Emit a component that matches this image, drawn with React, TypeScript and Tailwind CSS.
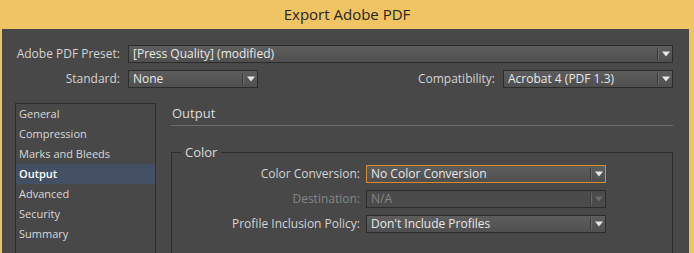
const font = { fontFamily: '"Open Sans", "Noto Sans", sans-serif' };

function Arrow({ disabled }: { disabled?: boolean }) {
  return (
    <svg width="8" height="6" viewBox="0 0 8 6">
      <path d="M0 0.5 L8 0.5 L4 5.5 Z" fill={disabled ? "#6a6a6a" : "#e6e6e6"} />
    </svg>
  );
}

function Select({
  value,
  className = "",
  focused,
  disabled,
}: {
  value: string;
  className?: string;
  focused?: boolean;
  disabled?: boolean;
}) {
  return (
    <div
      className={
        "flex h-[18px] items-center border " +
        (focused ? "border-[#d88a2c] " : "border-[#2c2c2c] ") +
        (disabled ? "bg-[#4b4b4b] " : "bg-gradient-to-b from-[#5d5d5d] to-[#4f4f4f] ") +
        className
      }
    >
      <span
        className={
          "flex-1 truncate pl-[4px] text-[12px] leading-[16px] " +
          (disabled ? "text-[#858585]" : "text-[#e8e8e8]")
        }
      >
        {value}
      </span>
      <span className="h-[12px] w-px bg-[#3a3a3a]" />
      <span className="h-[12px] w-px bg-[#6a6a6a]" />
      <span className="flex w-[13px] justify-center">
        <Arrow disabled={disabled} />
      </span>
    </div>
  );
}

const pages = ["General", "Compression", "Marks and Bleeds", "Output", "Advanced", "Security", "Summary"];

export default function App() {
  return (
    <div className="flex h-[253px] w-[694px] flex-col overflow-hidden bg-[#f0c462]" style={font}>
      {/* title bar */}
      <div className="flex h-[29px] shrink-0 items-center justify-center text-[15px] text-[#262626]">
        Export Adobe PDF
      </div>

      <div className="ml-[2px] mr-[5px] flex-1 bg-[#484848] pt-[16px] text-[12px] text-[#d4d4d4]">
        {/* preset */}
        <div className="flex items-center pr-[16px]">
          <span className="w-[118px] text-right">Adobe PDF Preset:</span>
          <Select value="[Press Quality] (modified)" className="ml-[8px] flex-1" />
        </div>

        {/* standard / compatibility */}
        <div className="mt-[7px] flex items-center pr-[16px]">
          <span className="w-[118px] text-right">Standard:</span>
          <Select value="None" className="ml-[8px] w-[130px]" />
          <span className="flex-1 text-right">Compatibility:</span>
          <Select value="Acrobat 4 (PDF 1.3)" className="ml-[8px] w-[170px]" />
        </div>

        <div className="mt-[15px] flex pl-[13px] pr-[16px]">
          {/* side list */}
          <div className="h-[200px] w-[141px] shrink-0 border border-[#2e2e2e]">
            {pages.map((p) => (
              <div
                key={p}
                className={
                  "flex h-[20px] items-center pl-[3px] text-[11px] " +
                  (p === "Output" ? "bg-[#435064] font-semibold text-white" : "text-[#d8d8d8]")
                }
              >
                {p}
              </div>
            ))}
          </div>

          {/* content */}
          <div className="ml-[15px] flex-1">
            <div className="flex h-[22px] items-center pl-[1px] text-[13px] text-[#dcdcdc]">Output</div>
            <div className="h-px bg-[#6c6c6c]" />

            <fieldset className="mt-[17px] h-[150px] border border-[#2e2e2e]">
              <legend className="ml-[9px] px-[4px] text-[13px] leading-[18px] text-[#dcdcdc]">Color</legend>
              <div className="flex flex-col gap-[7px] pt-[4px]">
                <div className="flex items-center">
                  <span className="w-[188px] text-right">Color Conversion:</span>
                  <Select value="No Color Conversion" focused className="ml-[6px] w-[240px]" />
                </div>
                <div className="flex items-center">
                  <span className="w-[188px] text-right text-[#868686]">Destination:</span>
                  <Select value="N/A" disabled className="ml-[6px] w-[240px]" />
                </div>
                <div className="flex items-center">
                  <span className="w-[188px] text-right">Profile Inclusion Policy:</span>
                  <Select value="Don't Include Profiles" className="ml-[6px] w-[240px]" />
                </div>
              </div>
            </fieldset>
          </div>
        </div>
      </div>
    </div>
  );
}
